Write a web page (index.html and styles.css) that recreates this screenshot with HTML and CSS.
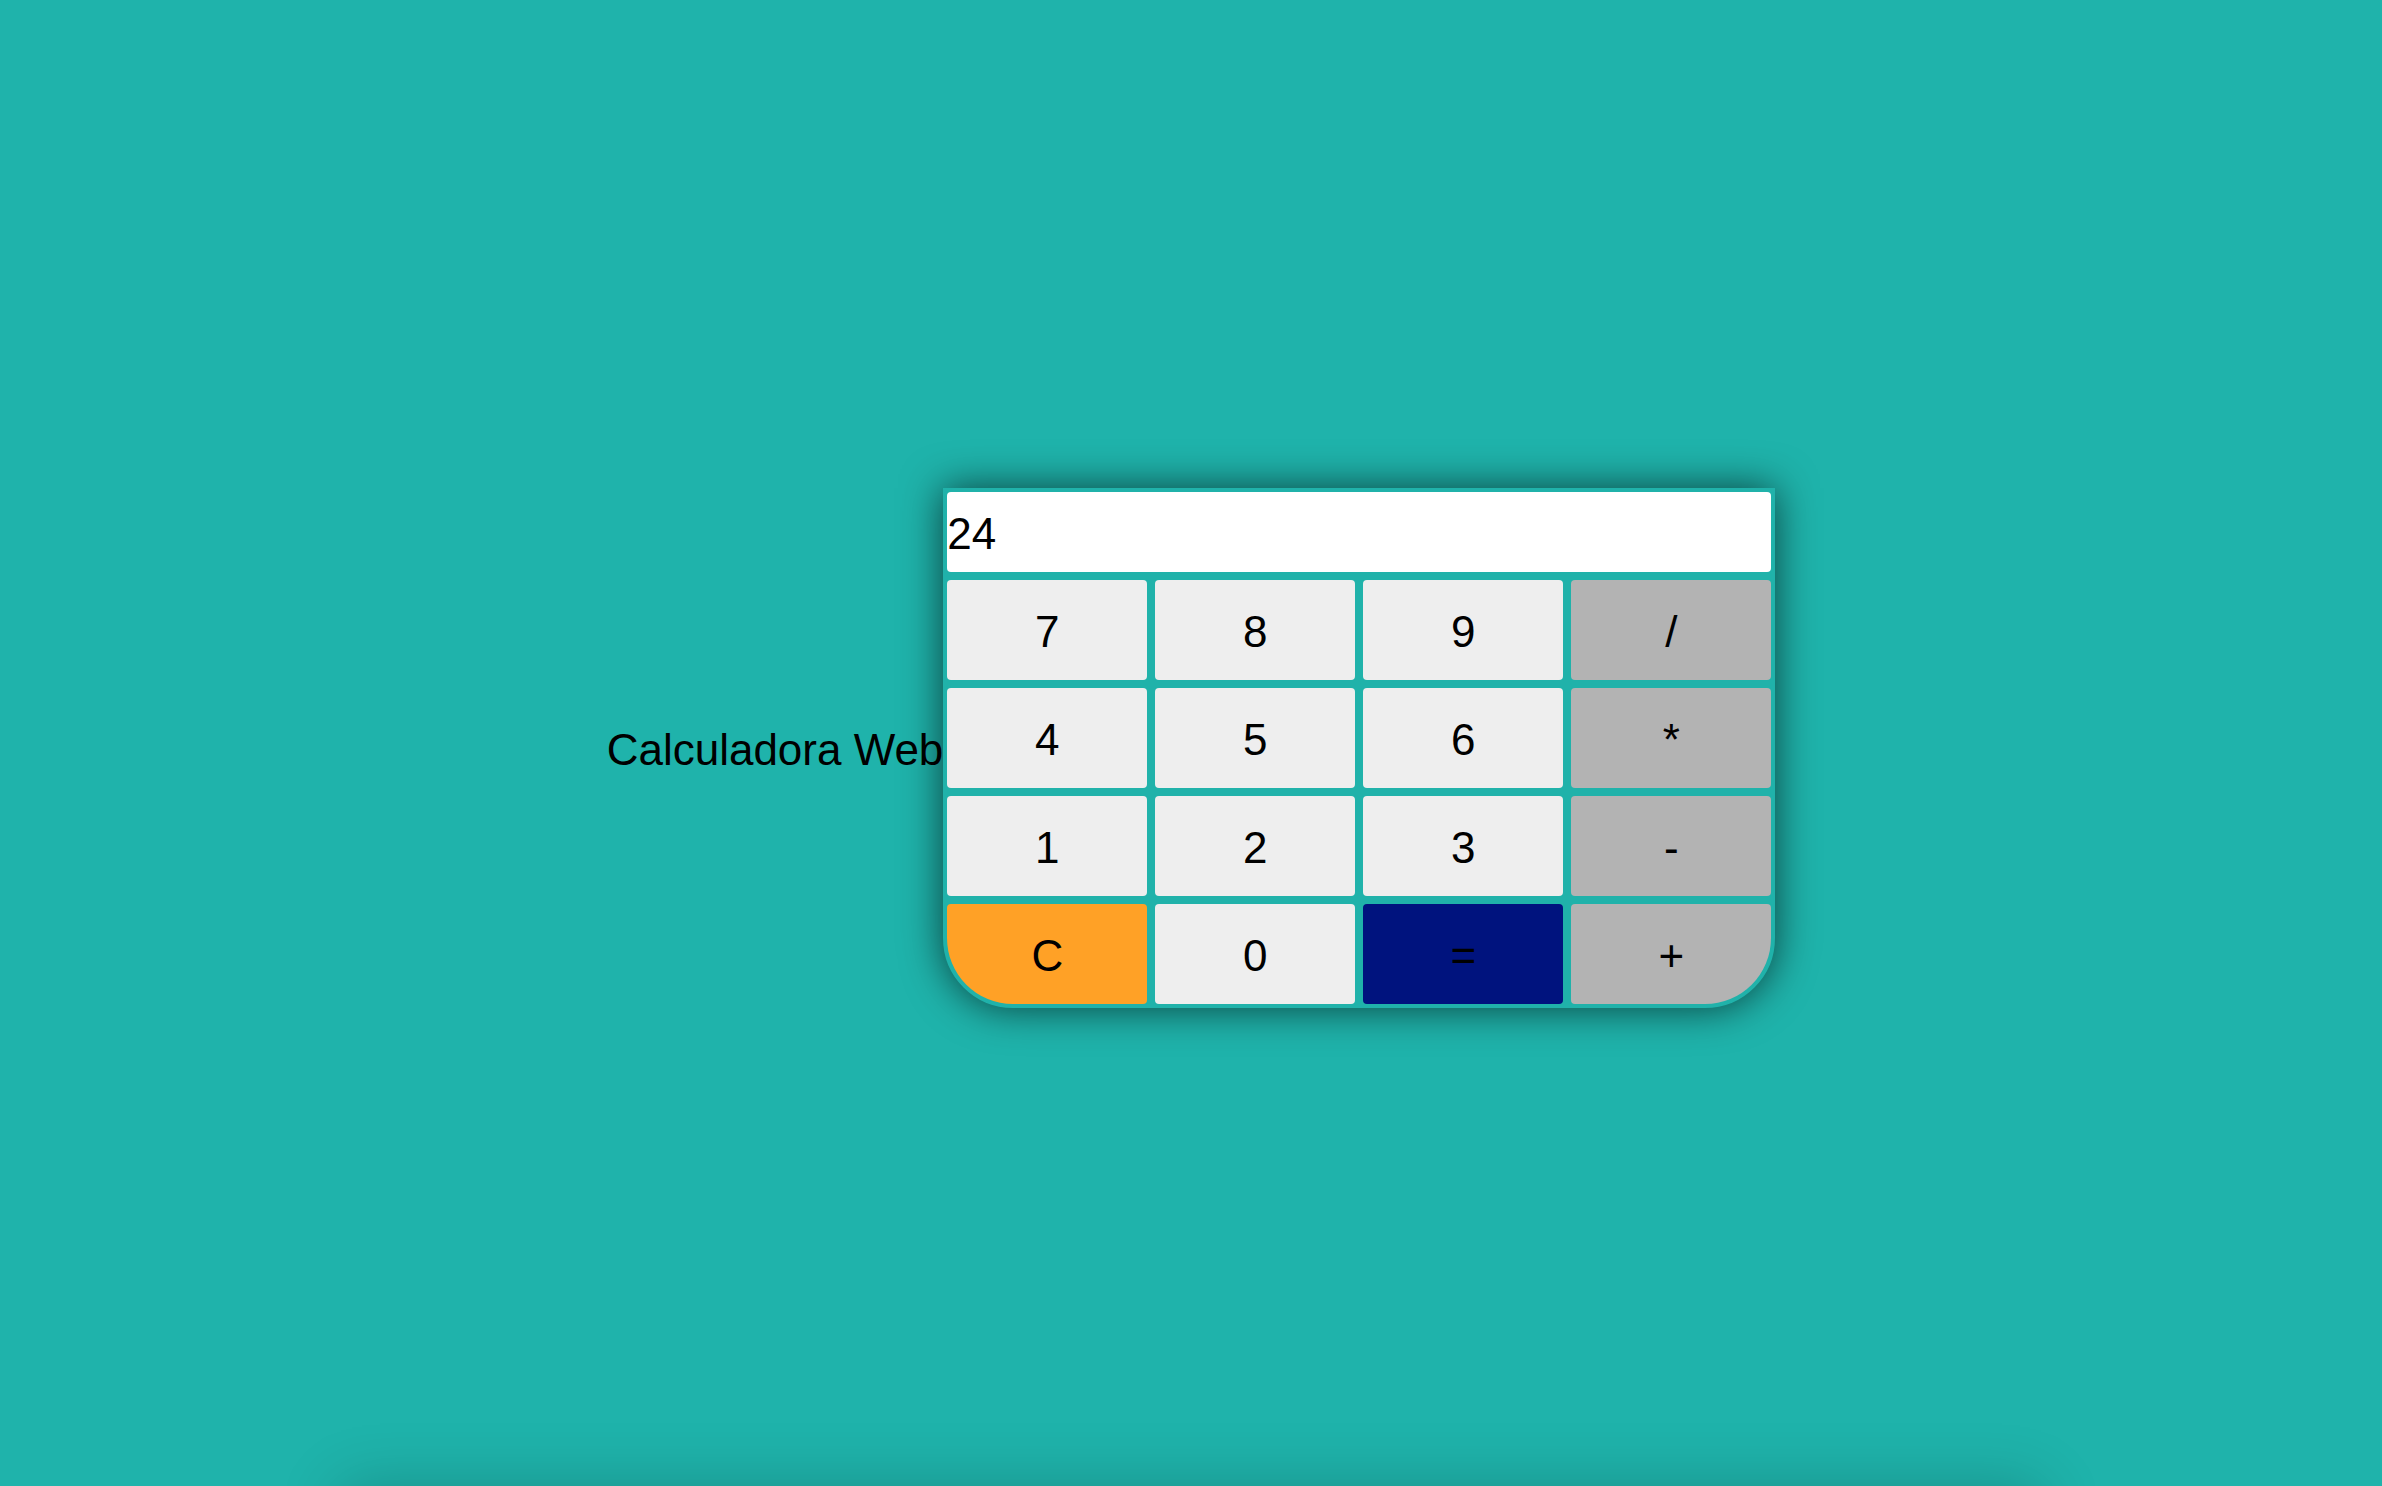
FILE: index.html
```html
<!DOCTYPE html>
<html lang="es">
<head>
<meta charset="utf-8">
<title>Calculadora Web</title>
<link rel="stylesheet" href="styles.css">
</head>
<body>
<div class="page">
  <p class="title">Calculadora Web</p>
  <div class="calc">
    <input class="display" type="text" value="24">
    <button class="key">7</button>
    <button class="key">8</button>
    <button class="key">9</button>
    <button class="key op">/</button>
    <button class="key">4</button>
    <button class="key">5</button>
    <button class="key">6</button>
    <button class="key op">*</button>
    <button class="key">1</button>
    <button class="key">2</button>
    <button class="key">3</button>
    <button class="key op">-</button>
    <button class="key clear">C</button>
    <button class="key">0</button>
    <button class="key equals">=</button>
    <button class="key op">+</button>
  </div>
</div>
<div class="below"></div>
</body>
</html>
```
FILE: styles.css
```css
html, body {
  margin: 0;
  padding: 0;
  background: #1fb3ab;
  font-family: "Liberation Sans", Arial, Helvetica, sans-serif;
  overflow: hidden;
}

.page {
  box-sizing: border-box;
  height: 1486px;
  padding-top: 10px;
  display: flex;
  justify-content: center;
  align-items: center;
}

.title {
  margin: 0;
  padding-top: 3px;
  font-size: 44px;
  color: #000;
  white-space: nowrap;
}

.calc {
  display: grid;
  grid-template-columns: repeat(4, 200px);
  grid-template-rows: 80px repeat(4, 100px);
  gap: 8px;
  border: 4px solid #20b2aa;
  background: #20b2aa;
  border-radius: 0 0 70px 70px;
  overflow: hidden;
  box-shadow: 0 0 40px rgba(0, 0, 0, 0.65);
}

.display {
  grid-column: 1 / span 4;
  margin: 0;
  padding: 3px 0 0 0;
  border: none;
  border-radius: 4px;
  background: #fff;
  font-family: inherit;
  font-size: 44px;
  color: #000;
  outline: none;
}

.key {
  margin: 0;
  padding: 3px 0 0 0;
  border: none;
  border-radius: 4px;
  background: #eeeeee;
  font-family: inherit;
  font-size: 44px;
  color: #000;
}

.op {
  background: #b3b3b3;
}

.clear {
  background: #ffa126;
}

.equals {
  background: #00137e;
}

.below {
  width: 1700px;
  height: 300px;
  margin: 0 auto;
  box-shadow: 0 0 60px rgba(0, 0, 0, 0.2);
}
```
